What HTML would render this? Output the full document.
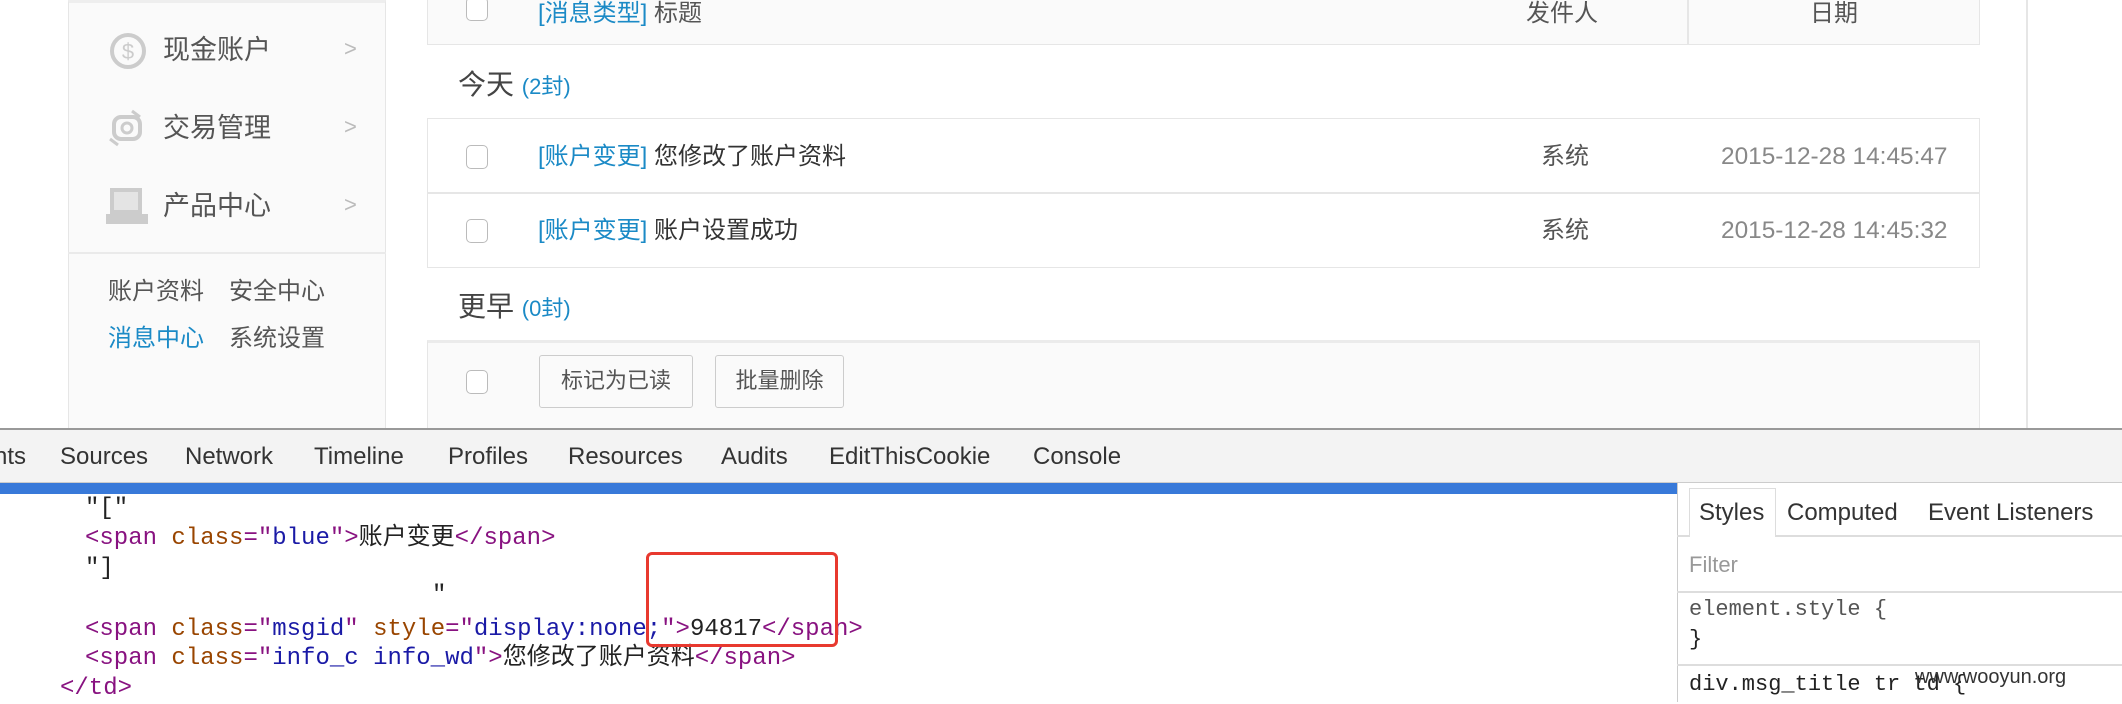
<!DOCTYPE html>
<html><head><meta charset="utf-8"><style>
*{margin:0;padding:0;box-sizing:border-box}
body{width:2122px;height:702px;overflow:hidden;background:#fff;position:relative;font-family:"Liberation Sans","Noto Sans CJK SC",sans-serif;color:#444}
.a{position:absolute;white-space:nowrap}
.cn{font-size:24px;line-height:30px}
.blue{color:#1b8ac6}
.cb{position:absolute;width:22px;height:24px;border:1.5px solid #bbb;border-radius:5px;background:#fff}
.btn{position:absolute;border:1.5px solid #ccc;border-radius:3px;background:#fafafa;font-size:22px;line-height:50px;text-align:center;color:#555}
.mono{font-family:"Liberation Mono","DejaVu Sans Mono","Noto Sans CJK SC",monospace;font-size:24px;line-height:30px;color:#222;letter-spacing:0}
.t{color:#881280}.n{color:#994500}.v{color:#1a1aa6}
.tab{font-size:24px;line-height:30px;color:#333;top:442px}
</style></head><body>
<div class="a" style="left:68px;top:0;width:318px;height:430px;background:#fafafa;border-left:1px solid #e6e6e6;border-right:1px solid #e6e6e6;border-top:3px solid #eee"></div>
<div class="a" style="left:68px;top:252px;width:318px;height:2px;background:#eaeaea"></div>
<svg class="a" style="left:108px;top:31px" width="40" height="40"><circle cx="20" cy="20" r="16" fill="none" stroke="#ccc" stroke-width="4"/><text x="20" y="28" font-size="22" text-anchor="middle" fill="#ccc" font-family="Liberation Sans">$</text></svg>
<svg class="a" style="left:108px;top:107px" width="40" height="42"><rect x="6" y="10" width="26" height="22" rx="7" fill="none" stroke="#ccc" stroke-width="4"/><circle cx="19" cy="21" r="5" fill="none" stroke="#ccc" stroke-width="3"/><path d="M24 4l8 6M10 38l-8-6" stroke="#ccc" stroke-width="3"/></svg>
<svg class="a" style="left:102px;top:186px" width="46" height="40"><rect x="8" y="2" width="32" height="26" fill="#ccc"/><rect x="12" y="6" width="24" height="18" fill="#e4e4e4"/><rect x="4" y="28" width="42" height="10" fill="#ccc"/></svg>
<div class="a" style="left:163px;top:33px;font-size:27px;line-height:34px;color:#555">现金账户</div>
<div class="a" style="left:163px;top:111px;font-size:27px;line-height:34px;color:#555">交易管理</div>
<div class="a" style="left:163px;top:189px;font-size:27px;line-height:34px;color:#555">产品中心</div>
<div class="a" style="left:344px;top:36px;font-size:22px;color:#bbb">&gt;</div>
<div class="a" style="left:344px;top:114px;font-size:22px;color:#bbb">&gt;</div>
<div class="a" style="left:344px;top:192px;font-size:22px;color:#bbb">&gt;</div>
<div class="a" style="left:108px;top:277px;font-size:24px;line-height:30px;color:#555">账户资料</div>
<div class="a" style="left:229px;top:277px;font-size:24px;line-height:30px;color:#555">安全中心</div>
<div class="a blue" style="left:108px;top:324px;font-size:24px;line-height:30px">消息中心</div>
<div class="a" style="left:229px;top:324px;font-size:24px;line-height:30px;color:#555">系统设置</div>
<div class="a" style="left:2026px;top:0;width:2px;height:430px;background:#e6e6e6"></div>
<div class="a" style="left:427px;top:0;width:1553px;height:45px;background:#fafafa;border:1.5px solid #e6e6e6;border-top:none"></div>
<div class="a" style="left:1687px;top:0;width:1.5px;height:44px;background:#e6e6e6"></div>
<div class="cb" style="left:466px;top:-3px"></div>
<div class="a cn" style="left:538px;top:-1px;color:#555"><span class="blue">[消息类型]</span> 标题</div>
<div class="a cn" style="left:1526px;top:-1px;color:#555">发件人</div>
<div class="a cn" style="left:1810px;top:-1px;color:#555">日期</div>
<div class="a" style="left:458px;top:68px;font-size:28px;line-height:34px;color:#444">今天 <span class="blue" style="font-size:22px">(2封)</span></div>
<div class="a" style="left:427px;top:118px;width:1553px;height:150px;background:#fff;border:1.5px solid #e6e6e6"></div>
<div class="a" style="left:427px;top:192px;width:1553px;height:1.5px;background:#e6e6e6"></div>
<div class="cb" style="left:466px;top:145px"></div>
<div class="cb" style="left:466px;top:219px"></div>
<div class="a cn" style="left:538px;top:142px;color:#333"><span class="blue">[账户变更]</span> 您修改了账户资料</div>
<div class="a cn" style="left:538px;top:216px;color:#333"><span class="blue">[账户变更]</span> 账户设置成功</div>
<div class="a cn" style="left:1541px;top:142px;color:#555">系统</div>
<div class="a cn" style="left:1541px;top:216px;color:#555">系统</div>
<div class="a" style="left:1721px;top:142px;font-size:24.4px;line-height:30px;color:#888">2015-12-28 14:45:47</div>
<div class="a" style="left:1721px;top:216px;font-size:24.4px;line-height:30px;color:#888">2015-12-28 14:45:32</div>
<div class="a" style="left:458px;top:290px;font-size:28px;line-height:34px;color:#444">更早 <span class="blue" style="font-size:22px">(0封)</span></div>
<div class="a" style="left:427px;top:340px;width:1553px;height:90px;background:#fafafa;border-top:3px solid #ebebeb;border-left:1.5px solid #e6e6e6;border-right:1.5px solid #e6e6e6"></div>
<div class="cb" style="left:466px;top:370px"></div>
<div class="btn" style="left:539px;top:355px;width:154px;height:53px">标记为已读</div>
<div class="btn" style="left:715px;top:355px;width:129px;height:53px">批量删除</div>
<div class="a" style="left:0;top:428px;width:2122px;height:2px;background:#999"></div>
<div class="a" style="left:0;top:430px;width:2122px;height:53px;background:#f3f3f3;border-bottom:1px solid #ccc"></div>
<div class="a tab" style="left:-6px">nts</div>
<div class="a tab" style="left:60px">Sources</div>
<div class="a tab" style="left:185px">Network</div>
<div class="a tab" style="left:314px">Timeline</div>
<div class="a tab" style="left:448px">Profiles</div>
<div class="a tab" style="left:568px">Resources</div>
<div class="a tab" style="left:721px">Audits</div>
<div class="a tab" style="left:829px">EditThisCookie</div>
<div class="a tab" style="left:1033px">Console</div>
<div class="a" style="left:0;top:483px;width:1677px;height:11px;background:#3879d9"></div>
<div class="a mono" style="left:85px;top:494px">"["</div>
<div class="a mono" style="left:85px;top:524px"><span class="t">&lt;span</span> <span class="n">class</span><span class="t">="</span><span class="v">blue</span><span class="t">"&gt;</span>账户变更<span class="t">&lt;/span&gt;</span></div>
<div class="a mono" style="left:85px;top:554px">"]</div>
<div class="a mono" style="left:432px;top:581px">"</div>
<div class="a mono" style="left:85px;top:615px"><span class="t">&lt;span</span> <span class="n">class</span><span class="t">="</span><span class="v">msgid</span><span class="t">"</span> <span class="n">style</span><span class="t">="</span><span class="v">display:none;</span><span class="t">"&gt;</span>94817<span class="t">&lt;/span&gt;</span></div>
<div class="a mono" style="left:85px;top:644px"><span class="t">&lt;span</span> <span class="n">class</span><span class="t">="</span><span class="v">info_c info_wd</span><span class="t">"&gt;</span>您修改了账户资料<span class="t">&lt;/span&gt;</span></div>
<div class="a mono" style="left:60px;top:674px"><span class="t">&lt;/td&gt;</span></div>
<div class="a" style="left:646px;top:552px;width:192px;height:95px;border:3.5px solid #e8392f;border-radius:6px"></div>
<div class="a" style="left:1677px;top:483px;width:445px;height:219px;background:#fff;border-left:1.5px solid #ccc"></div>
<div class="a" style="left:1677px;top:535px;width:445px;height:2px;background:#ddd"></div>
<div class="a" style="left:1689px;top:488px;width:87px;height:49px;border:1.5px solid #ddd;border-bottom:none;background:#fff"></div>
<div class="a tab" style="left:1699px;top:498px">Styles</div>
<div class="a tab" style="left:1787px;top:498px">Computed</div>
<div class="a tab" style="left:1928px;top:498px">Event Listeners</div>
<div class="a" style="left:1689px;top:550px;font-size:22px;line-height:30px;color:#999">Filter</div>
<div class="a" style="left:1677px;top:591px;width:445px;height:1.5px;background:#ddd"></div>
<div class="a mono" style="left:1689px;top:595px;color:#555;font-size:22px">element.style {</div>
<div class="a mono" style="left:1689px;top:625px;font-size:22px">}</div>
<div class="a" style="left:1677px;top:664px;width:445px;height:1.5px;background:#ddd"></div>
<div class="a mono" style="left:1689px;top:670px;font-size:22px">div.msg_title tr td {</div>
<div class="a" style="left:1915px;top:664px;font-size:20px;line-height:26px;color:#333">www.wooyun.org</div>
</body></html>
